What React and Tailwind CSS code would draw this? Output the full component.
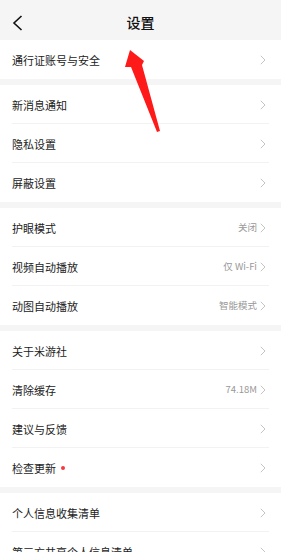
import React from "react";

const Chevron = () => (
  <svg width="6" height="10" viewBox="0 0 6 10" className="shrink-0">
    <path d="M0.8 0.8 L5 5 L0.8 9.2" fill="none" stroke="#c4c4c4" strokeWidth="1" />
  </svg>
);

const Row = ({ label, value, dot, last }) => (
  <div className="relative flex h-[39px] items-center pl-3 pr-[15px]">
    <div className="flex flex-1 items-center pt-px text-[11px] text-[#222]">
      <span>{label}</span>
      {dot && <span className="ml-[5px] h-[4px] w-[4px] rounded-full bg-[#f23b3b]" />}
    </div>
    {value && <span className="mr-[3px] text-[9.5px] text-[#999]">{value}</span>}
    <Chevron />
    {!last && <div className="absolute bottom-0 left-3 right-3 h-px bg-[#f2f2f2]" />}
  </div>
);

const Section = ({ rows }) => (
  <div className="bg-white">
    {rows.map((r, i) => (
      <Row key={i} {...r} last={i === rows.length - 1} />
    ))}
  </div>
);

export default function App() {
  return (
    <div
      className="relative h-[552px] w-[281px] overflow-hidden bg-[#f5f5f5]"
      style={{ fontFamily: '"Noto Sans CJK SC", "Noto Sans", sans-serif' }}
    >
      <div className="relative flex h-10 items-center justify-center pt-[4px]">
        <svg width="12" height="16" viewBox="0 0 12 16" className="absolute left-[12px] top-[15px]">
          <path d="M9.5 1 L2 8 L9.5 15" fill="none" stroke="#111" strokeWidth="1.6" />
        </svg>
        <span className="text-[14px] font-medium text-[#111]">设置</span>
      </div>
      <div className="flex flex-col gap-[6px]">
        <Section rows={[{ label: "通行证账号与安全" }]} />
        <Section rows={[{ label: "新消息通知" }, { label: "隐私设置" }, { label: "屏蔽设置" }]} />
        <Section
          rows={[
            { label: "护眼模式", value: "关闭" },
            { label: "视频自动播放", value: "仅 Wi-Fi" },
            { label: "动图自动播放", value: "智能模式" },
          ]}
        />
        <Section
          rows={[
            { label: "关于米游社" },
            { label: "清除缓存", value: "74.18M" },
            { label: "建议与反馈" },
            { label: "检查更新", dot: true },
          ]}
        />
        <Section rows={[{ label: "个人信息收集清单" }, { label: "第三方共享个人信息清单" }]} />
      </div>
      <svg width="281" height="552" className="pointer-events-none absolute left-0 top-0">
        <polygon
          points="130,50 144,61 142,65 160,131 157,132 131,67 125,67"
          fill="#ff1a1a"
        />
      </svg>
    </div>
  );
}
